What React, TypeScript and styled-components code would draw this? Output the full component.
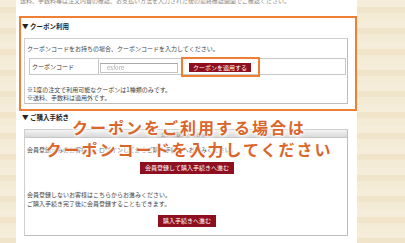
import React from "react";
import styled, { createGlobalStyle } from "styled-components";

const GlobalStyle = createGlobalStyle`
  html, body { margin: 0; padding: 0; }
  body {
    background: #f2e7cd;
    font-family: "Noto Sans CJK JP", "Noto Sans", sans-serif;
    overflow: hidden;
  }
`;

const Page = styled.div`
  display: flex;
  height: 243px;
  overflow: hidden;
  background:
    repeating-linear-gradient(180deg, rgba(255,255,255,0.18) 0 7px, rgba(200,170,110,0.08) 7px 13px, rgba(255,255,255,0.1) 13px 21px),
    #f3e9d1;
`;

const Column = styled.div`
  position: relative;
  margin-left: 16px;
  width: 341px;
  padding-left: 3px;
  box-sizing: border-box;
  background: #ffffff;
  display: flex;
  flex-direction: column;
`;

const Small = styled.p<{ $mt?: number }>`
  margin: ${(p) => p.$mt || 0}px 0 0 0;
  font-size: 6px;
  line-height: 9px;
  color: #444;
  white-space: nowrap;
`;

const TopNote = styled(Small)`
  margin-top: -4px;
  padding-left: 1px;
  color: #888;
`;

const CouponPanel = styled.section`
  margin-top: 11px;
  height: 95px;
  box-sizing: border-box;
  border: 2px solid #f07f36;
  display: flex;
  flex-direction: column;
`;

const Heading = styled.h3<{ $ml: number; $mt: number }>`
  margin: ${(p) => p.$mt}px 0 0 ${(p) => p.$ml}px;
  font-size: 6.5px;
  line-height: 9px;
  font-weight: bold;
  color: #222;
`;

const InnerBox = styled.div`
  margin: 7px 0 0 3px;
  width: 324px;
  height: 66px;
  box-sizing: border-box;
  border: 1px solid #cfcfcf;
  border-right-color: #bdbdbd;
  border-bottom-color: #bdbdbd;
  padding-left: 2px;
  display: flex;
  flex-direction: column;
`;

const Table = styled.div`
  margin: 5px 0 0 2px;
  width: 317px;
  height: 17px;
  box-sizing: border-box;
  border: 1px solid #c8c8c8;
  display: grid;
  grid-template-columns: 69px 1fr;
`;

const LabelCell = styled.div`
  border-right: 1px solid #c8c8c8;
  padding-left: 2px;
  font-size: 6px;
  line-height: 15px;
  color: #333;
`;

const ValueCell = styled.div`
  display: flex;
  align-items: flex-start;
  padding-top: 4px;
  padding-left: 1px;
`;

const FakeInput = styled.div`
  width: 78px;
  height: 10px;
  box-sizing: border-box;
  border: 1px solid #c4c4c4;
  border-top-color: #a9a9a9;
  background: #fff;
  font-size: 6px;
  line-height: 8px;
  padding-left: 6px;
  color: #aaa;
  filter: blur(0.6px);
`;

const Highlight = styled.div`
  position: relative;
  margin-left: 11px;
  &::after {
    content: "";
    position: absolute;
    left: -8px;
    right: -9px;
    top: -6px;
    bottom: -5px;
    border: 2px solid #f07f36;
    pointer-events: none;
  }
`;

const RedButton = styled.button<{ $h: number; $px: number }>`
  display: block;
  height: ${(p) => p.$h}px;
  padding: 0 ${(p) => p.$px}px;
  margin: 0;
  border: 0;
  background: #8e0f1f;
  color: #fff;
  font-family: "Noto Sans CJK JP", sans-serif;
  font-size: 6px;
  line-height: ${(p) => p.$h}px;
  white-space: nowrap;
  cursor: pointer;
`;

const Notes = styled.div`
  margin-top: 11px;
  display: flex;
  flex-direction: column;
  & > p { line-height: 8px; }
`;

const ProcedureBox = styled.div`
  margin: 7px 0 0 5px;
  width: 324px;
  height: 107px;
  box-sizing: border-box;
  border: 1px solid #cfcfcf;
  border-right-color: #bdbdbd;
  border-bottom-color: #bdbdbd;
  display: flex;
  flex-direction: column;
`;

const BoxHeader = styled.div`
  height: 8px;
  box-sizing: border-box;
  background: linear-gradient(#f4f4f4, #d9d9d9);
  border-bottom: 1px solid #c6c6c6;
  font-size: 5px;
  line-height: 7px;
  color: #777;
  text-align: center;
`;

const BoxBody = styled.div`
  padding: 7px 0 0 2px;
  display: flex;
  flex-direction: column;
`;

const Center = styled.div<{ $mt: number }>`
  margin-top: ${(p) => p.$mt}px;
  display: flex;
  justify-content: center;
`;

const Overlay = styled.div`
  position: absolute;
  left: 0;
  right: 0;
  top: 116px;
  padding-left: 5px;
  text-align: center;
  font-family: "Noto Sans CJK JP", sans-serif;
  font-weight: bold;
  font-size: 16px;
  line-height: 22px;
  letter-spacing: 2px;
  color: #d9662b;
  text-shadow: 0 0 2px #fff, 0 0 3px #fff, 0 0 4px #fff, 0 0 5px #fff;
  pointer-events: none;
`;

export default function App() {
  return (
    <>
      <GlobalStyle />
      <Page>
        <Column>
          <TopNote>送料、手数料等は注文内容の確認、お支払い方法を入力された後の最終確認画面でご確認ください。</TopNote>
          <CouponPanel>
            <Heading $ml={1} $mt={4}>▼ クーポン利用</Heading>
            <InnerBox>
              <Small $mt={5}>クーポンコードをお持ちの場合、クーポンコードを入力してください。</Small>
              <Table>
                <LabelCell>クーポンコード</LabelCell>
                <ValueCell>
                  <FakeInput>esfore</FakeInput>
                  <Highlight>
                    <RedButton $h={9} $px={4}>クーポンを適用する</RedButton>
                  </Highlight>
                </ValueCell>
              </Table>
              <Notes>
                <Small>※1度の注文で利用可能なクーポンは1種類のみです。</Small>
                <Small>※送料、手数料は適用外です。</Small>
              </Notes>
            </InnerBox>
          </CouponPanel>
          <Heading $ml={3} $mt={2}>▼ ご購入手続き</Heading>
          <ProcedureBox>
            <BoxHeader>会員登録済みのお客様</BoxHeader>
            <BoxBody>
              <Small>会員登録済みのお客様は、ログインしてからご購入手続きへお進みください。</Small>
              <Center $mt={8}>
                <RedButton $h={12} $px={5}>会員登録して購入手続きへ進む</RedButton>
              </Center>
              <Small $mt={16}>会員登録しないお客様はこちらからお進みください。</Small>
              <Small>ご購入手続き完了後に会員登録することもできます。</Small>
              <Center $mt={7}>
                <RedButton $h={12} $px={5}>購入手続きへ進む</RedButton>
              </Center>
            </BoxBody>
          </ProcedureBox>
          <Overlay>
            クーポンをご利用する場合は
            <br />
            クーポンコードを入力してください
          </Overlay>
        </Column>
      </Page>
    </>
  );
}
